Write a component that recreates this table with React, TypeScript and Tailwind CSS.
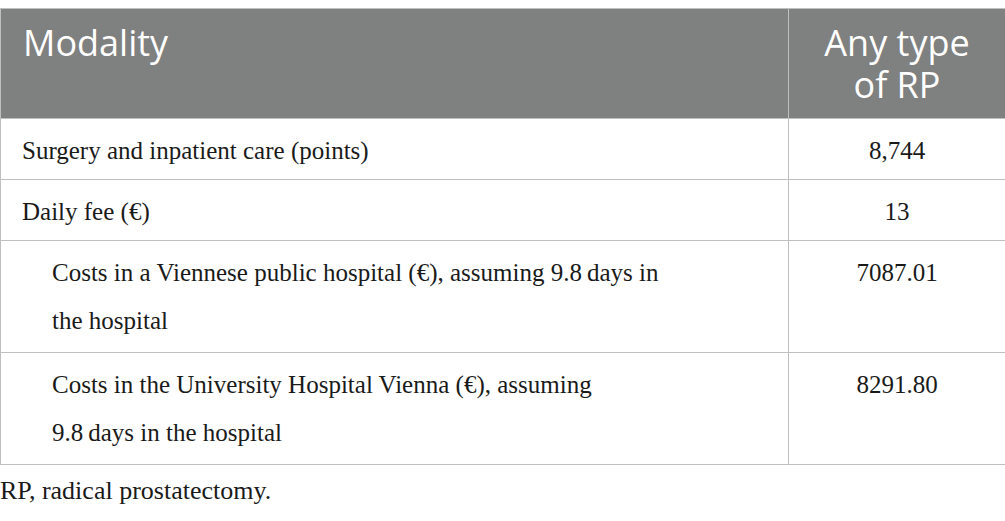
import React from "react";

const serif = "font-['Liberation_Serif',_'Times_New_Roman',_serif]";
const sans = "font-['Open_Sans',_'Noto_Sans',_sans-serif]";

export default function App() {
  const base = "border border-[#bfbfbf] align-top pt-[8px] text-[25px] leading-[48px] text-[#1a1a1a]";
  const one = `${base} pb-[4px]`;
  const two = `${base} pb-[7px]`;
  return (
    <div className={`w-[1005px] h-[521px] bg-white ${serif}`}>
      <div className="h-[8px]" />
      <table className="w-[1005px] table-fixed border-collapse">
        <colgroup>
          <col className="w-[788px]" />
          <col className="w-[217px]" />
        </colgroup>
        <thead>
          <tr className="bg-[#7f8080]">
            <th className={`border border-[#bfbfbf] align-top text-left font-normal text-white text-[36px] leading-[42px] pl-[22px] pt-[13px] pb-[12px] ${sans}`}>
              Modality
            </th>
            <th className={`border border-[#bfbfbf] align-top text-center font-normal text-white text-[36px] leading-[42px] pt-[13px] pb-[12px] ${sans}`}>
              Any type
              <br />
              of RP
            </th>
          </tr>
        </thead>
        <tbody>
          <tr>
            <td className={`${one} pl-[21px] whitespace-nowrap`}>Surgery and inpatient care (points)</td>
            <td className={`${one} text-center`}>8,744</td>
          </tr>
          <tr>
            <td className={`${one} pl-[21px] whitespace-nowrap`}>Daily fee (€)</td>
            <td className={`${one} text-center`}>13</td>
          </tr>
          <tr>
            <td className={`${two} pl-[51px] whitespace-nowrap`}>
              Costs in a Viennese public hospital (€), assuming 9.8{"\u2009"}days in
              <br />
              the hospital
            </td>
            <td className={`${two} text-center`}>7087.01</td>
          </tr>
          <tr>
            <td className={`${two} pl-[51px] whitespace-nowrap`}>
              Costs in the University Hospital Vienna (€), assuming
              <br />
              9.8{"\u2009"}days in the hospital
            </td>
            <td className={`${two} text-center`}>8291.80</td>
          </tr>
        </tbody>
      </table>
      <p className="text-[26px] leading-[48px] text-[#1a1a1a] mt-[2px]">RP, radical prostatectomy.</p>
    </div>
  );
}
